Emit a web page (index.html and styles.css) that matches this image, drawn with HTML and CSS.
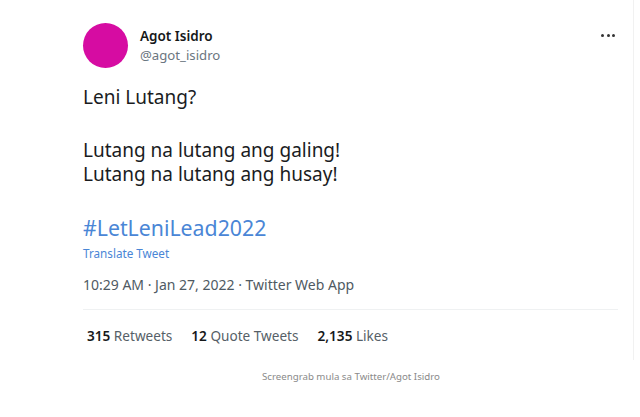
FILE: index.html
```html
<!DOCTYPE html>
<html>
<head>
<meta charset="utf-8">
<link rel="stylesheet" href="styles.css">
</head>
<body>
<div class="frame">
  <div class="tweet">
    <div class="header">
      <div class="avatar"></div>
      <div class="names">
        <div class="name">Agot Isidro</div>
        <div class="handle">@agot_isidro</div>
      </div>
      <div class="more"><span></span><span></span><span></span></div>
    </div>
    <div class="body">
      <p>Leni Lutang?</p>
      <p>Lutang na lutang ang galing!<br>Lutang na lutang ang husay!</p>
      <p class="tag">#LetLeniLead2022</p>
    </div>
    <div class="translate">Translate Tweet</div>
    <div class="meta">10:29 AM · Jan 27, 2022 · Twitter Web App</div>
    <div class="stats">
      <span class="stat"><b>315</b> Retweets</span>
      <span class="stat"><b>12</b> Quote Tweets</span>
      <span class="stat"><b>2,135</b> Likes</span>
    </div>
  </div>
</div>
<div class="caption">Screengrab mula sa Twitter/Agot Isidro</div>
</body>
</html>
```
FILE: styles.css
```css
html, body {
  margin: 0;
  background: #ffffff;
}
body {
  font-family: "Noto Sans", "Open Sans", sans-serif;
  color: #0f1419;
}
.frame {
  width: 634px;
  height: 360px;
  box-sizing: border-box;
  border-right: 1px solid #f1f1f1;
  padding: 23px 0 0 83px;
}
.tweet {
  width: 535px;
}
.header {
  display: flex;
  align-items: flex-start;
}
.avatar {
  width: 45px;
  height: 45px;
  border-radius: 50%;
  background: #d60ca2;
  flex: none;
}
.names {
  margin-left: 12px;
  padding-top: 4px;
}
.name {
  font-weight: 600;
  font-size: 13.5px;
  line-height: 19px;
  color: #16181a;
}
.handle {
  font-size: 13.2px;
  line-height: 19px;
  color: #6b7680;
}
.more {
  margin-left: auto;
  margin-top: 11px;
  margin-right: 3px;
  display: flex;
  gap: 2.5px;
}
.more span {
  width: 3px;
  height: 3px;
  border-radius: 50%;
  background: #333;
}
.body {
  margin-top: 17px;
  font-size: 19px;
  line-height: 24px;
  color: #1a1c1e;
}
.body p {
  margin: 0 0 29px 0;
}
.body p.tag {
  margin: 0;
  color: #4a86d6;
  font-size: 21.3px;
  line-height: 26px;
}
.translate {
  margin-top: 4px;
  font-size: 11.7px;
  line-height: 16px;
  color: #4a86d6;
}
.meta {
  margin-top: 14px;
  font-size: 14px;
  line-height: 20px;
  color: #4f5a63;
  padding-bottom: 14px;
  border-bottom: 1px solid #eff1f2;
}
.stats {
  display: flex;
  gap: 19px;
  padding: 16px 0 0 4px;
  font-size: 13.6px;
  line-height: 20px;
  color: #565f67;
}
.stats b {
  color: #16181a;
  font-weight: 600;
}
.caption {
  margin-top: 10px;
  padding-left: 262px;
  font-size: 9.7px;
  line-height: 14px;
  color: #8a8a8a;
}
```
